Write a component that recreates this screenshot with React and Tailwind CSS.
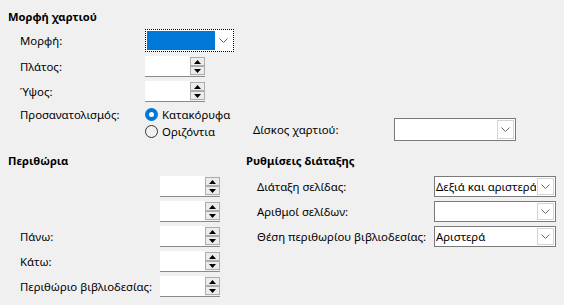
import React from "react";

function Chevron() {
  return (
    <svg width="9" height="5" viewBox="0 0 9 5" className="block">
      <path d="M0.5 0.5 L4.5 4.5 L8.5 0.5" fill="none" stroke="#6a6a6a" strokeWidth="1" />
    </svg>
  );
}

function SpinBtn({ up }) {
  return (
    <div className="h-[9px] w-[15px] border border-[#adadad] bg-[#ececec] flex items-center justify-center">
      <svg width="7" height="4" viewBox="0 0 7 4" className="block">
        {up ? <path d="M0 4 L3.5 0 L7 4 Z" fill="#000" /> : <path d="M0 0 L3.5 4 L7 0 Z" fill="#000" />}
      </svg>
    </div>
  );
}

function Spin() {
  return (
    <div className="flex h-[21px] w-[60px] border-b border-[#8a8a8a]">
      <div className="flex-1 bg-white" />
      <div className="flex flex-col pt-[1px] gap-0">
        <SpinBtn up />
        <SpinBtn />
      </div>
    </div>
  );
}

function Combo({ text, w, h = "h-[21px]" }) {
  return (
    <div className={`flex ${w} ${h} border border-[#7a7a7a] bg-white`}>
      <div className="flex-1 overflow-hidden whitespace-nowrap pl-[1px] leading-[19px]">{text}</div>
      <div className="w-[17px] m-[1px] border border-[#d4d4d4] bg-white flex items-center justify-center">
        <Chevron />
      </div>
    </div>
  );
}

function Radio({ checked, label }) {
  return (
    <div className="flex items-center h-[17px]">
      {checked ? (
        <div className="w-[13px] h-[13px] rounded-full bg-[#0078d7] flex items-center justify-center">
          <div className="w-[5px] h-[5px] rounded-full bg-white" />
        </div>
      ) : (
        <div className="w-[13px] h-[13px] rounded-full border border-[#333] bg-transparent" />
      )}
      <span className="ml-[4px]">{label}</span>
    </div>
  );
}

export default function App() {
  return (
    <div className="w-[564px] h-[305px] bg-[#f0f0f0] text-[11.4px] text-black overflow-hidden font-['Noto_Sans',sans-serif]">
      {/* Section 1 */}
      <div className="pl-[8px] pt-[9px]">
        <div className="h-[16px] leading-[16px] font-bold text-[11.2px]">Μορφή χαρτιού</div>
        <div className="pl-[12px]">
          <div className="flex items-center mt-[4px]">
            <div className="w-[125px]">Μορφή:</div>
            <div className="flex w-[89px] h-[23px] border border-dotted border-black bg-white p-[1px]">
              <div className="flex-1 bg-[#0078d7]" />
              <div className="w-[17px] flex items-center justify-center">
                <Chevron />
              </div>
            </div>
          </div>
          <div className="flex items-center mt-[4px]">
            <div className="w-[125px]">Πλάτος:</div>
            <Spin />
          </div>
          <div className="flex items-center mt-[4px]">
            <div className="w-[125px]">Ύψος:</div>
            <Spin />
          </div>
          <div className="flex items-start mt-[4px]">
            <div className="w-[125px] h-[17px] flex items-center">Προσανατολισμός:</div>
            <div className="w-[108px]">
              <Radio checked label="Κατακόρυφα" />
              <Radio label="Οριζόντια" />
            </div>
            <div className="flex items-center mt-[12px]">
              <div className="w-[141px]">Δίσκος χαρτιού:</div>
              <Combo w="w-[122px]" h="h-[23px]" text="" />
            </div>
          </div>
        </div>
      </div>

      {/* Section 2 */}
      <div className="flex mt-[12px]">
        <div className="w-[246px] pl-[8px]">
          <div className="h-[16px] leading-[16px] font-bold text-[11.2px]">Περιθώρια</div>
          <div className="pl-[12px] mt-[7px] flex flex-col gap-[4px]">
            <div className="flex items-center">
              <div className="w-[140px]" />
              <Spin />
            </div>
            <div className="flex items-center">
              <div className="w-[140px]" />
              <Spin />
            </div>
            <div className="flex items-center">
              <div className="w-[140px]">Πάνω:</div>
              <Spin />
            </div>
            <div className="flex items-center">
              <div className="w-[140px]">Κάτω:</div>
              <Spin />
            </div>
            <div className="flex items-center">
              <div className="w-[140px] whitespace-nowrap">Περιθώριο βιβλιοδεσίας:</div>
              <Spin />
            </div>
          </div>
        </div>
        <div>
          <div className="h-[16px] leading-[16px] font-bold text-[11.2px]">Ρυθμίσεις διάταξης</div>
          <div className="pl-[11px] mt-[7px] flex flex-col gap-[4px]">
            <div className="flex items-center">
              <div className="w-[177px]">Διάταξη σελίδας:</div>
              <Combo w="w-[122px]" text="Δεξιά και αριστερά" />
            </div>
            <div className="flex items-center">
              <div className="w-[177px]">Αριθμοί σελίδων:</div>
              <Combo w="w-[122px]" text="" />
            </div>
            <div className="flex items-center">
              <div className="w-[177px] whitespace-nowrap">Θέση περιθωρίου βιβλιοδεσίας:</div>
              <Combo w="w-[122px]" text="Αριστερά" />
            </div>
          </div>
        </div>
      </div>
    </div>
  );
}
